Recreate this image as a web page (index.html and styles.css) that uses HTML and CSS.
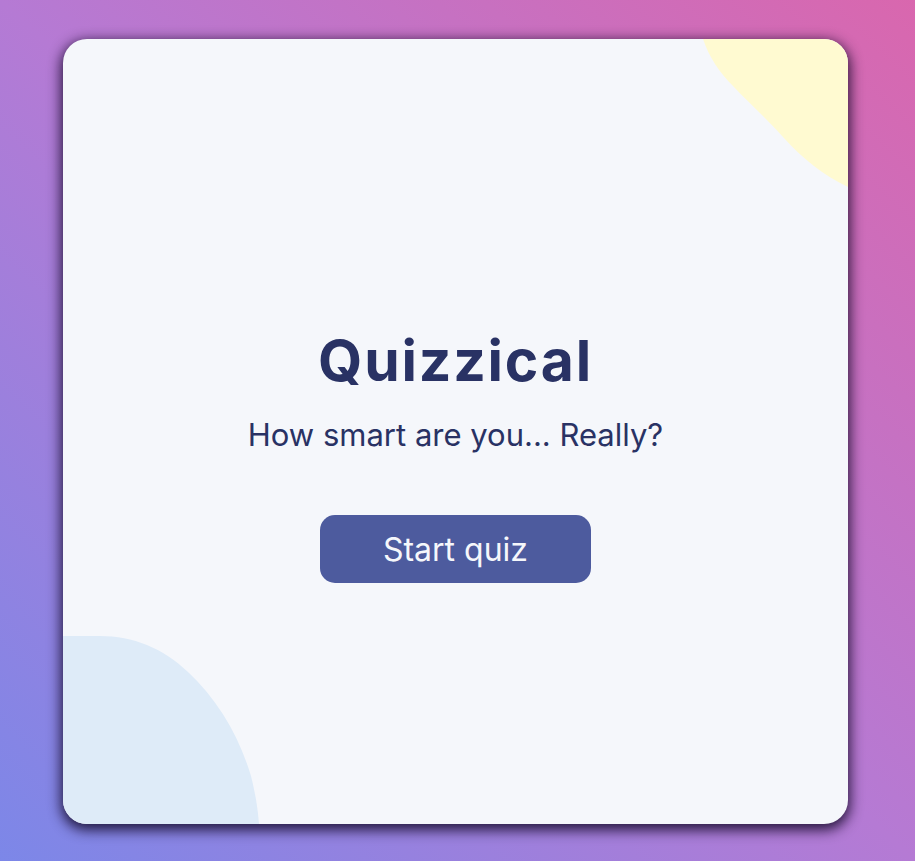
FILE: index.html
```html
<!DOCTYPE html>
<html lang="en">
<head>
<meta charset="utf-8">
<title>Quizzical</title>
<link rel="stylesheet" href="styles.css">
</head>
<body>
<main class="page">
  <section class="card">
    <svg class="blob blob-yellow" viewBox="0 0 145 148" aria-hidden="true">
      <path d="M0 0 H145 V148 C120 136 100 120 80 98 C62 78 46 64 30 47 C16 33 6 18 0 0 Z" fill="#fffad1"/>
    </svg>
    <svg class="blob blob-blue" viewBox="0 0 196 188" aria-hidden="true">
      <path d="M0 0 H37 C70 0 100 12 125 36 C155 64 176 100 188 140 C193 160 195 175 196 188 H0 Z" fill="#deebf8"/>
    </svg>
    <div class="intro">
      <h1 class="title">Quizzical</h1>
      <p class="subtitle">How smart are you... Really?</p>
      <button class="start-btn" type="button">Start quiz</button>
    </div>
  </section>
</main>
</body>
</html>
```

FILE: styles.css
```css
* { box-sizing: border-box; }
html, body { margin: 0; height: 100%; }
body {
  background: linear-gradient(to top right, #7c87e8 0%, #b57ad4 50%, #d967ae 100%);
  font-family: Inter, "Noto Sans", sans-serif;
}
.page {
  height: 100vh;
  display: flex;
  align-items: center;
  justify-content: center;
  padding-right: 4px;
  padding-top: 2px;
}
.card {
  position: relative;
  width: 785px;
  height: 785px;
  background: #f5f7fb;
  border-radius: 24px;
  overflow: hidden;
  box-shadow: 0 4px 13px 2px rgba(15, 5, 35, 0.85);
  display: flex;
  align-items: center;
  justify-content: center;
}
.blob { position: absolute; display: block; }
.blob-yellow { top: 0; right: 0; width: 145px; height: 148px; }
.blob-blue { bottom: 0; left: 0; width: 196px; height: 188px; }
.intro {
  position: relative;
  display: flex;
  flex-direction: column;
  align-items: center;
  margin-top: 52px;
}
.title {
  margin: 0;
  font-size: 57px;
  font-weight: 700;
  letter-spacing: 1.8px;
  color: #293264;
  line-height: 1;
}
.subtitle {
  margin: 27px 0 0;
  font-size: 31px;
  font-weight: 400;
  color: #293264;
  line-height: 1.2;
}
.start-btn {
  margin-top: 62px;
  width: 271px;
  height: 68px;
  border: none;
  border-radius: 15px;
  background: #4d5b9e;
  color: #f5f7fb;
  font-family: Inter, "Noto Sans", sans-serif;
  font-size: 32px;
  font-weight: 400;
}
```
